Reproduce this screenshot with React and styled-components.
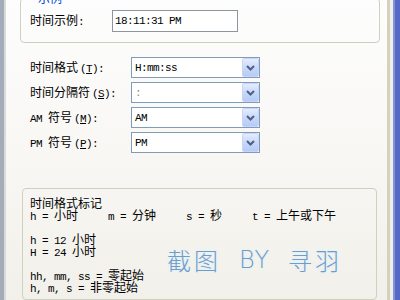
import React from 'react';
import styled, { createGlobalStyle } from 'styled-components';

const Global = createGlobalStyle`
  html, body { margin: 0; padding: 0; }
  body {
    width: 400px; height: 300px; overflow: hidden;
    font-family: "Noto Sans CJK SC", "Noto Sans", sans-serif;
    color: #000;
  }
`;

const Window = styled.div`
  width: 400px; height: 300px; display: flex; overflow: hidden;
`;
const LeftEdge = styled.div`
  width: 6px; flex: none;
  background: linear-gradient(to right, #a3adba 0 4px, #d9dbd9 4px 6px);
`;
const RightEdge = styled.div`
  width: 13px; flex: none;
  background: linear-gradient(to right, #d6d1bc 0 3px, #efeee9 3px 6px, #8393d8 6px 8px, #5568c6 8px);
`;
const Panel = styled.div`
  flex: 1; display: flex; flex-direction: column;
  background: linear-gradient(#fdfdfd, #f9f8f5 45%, #f1f0ea);
`;

const Ascii = styled.span`
  font-family: "Liberation Mono", monospace;
  font-size: 11px;
  letter-spacing: -0.6px;
  margin-left: ${p => (p.$gap ? 2 : 0)}px;
`;
const Key = styled.span`
  text-decoration: underline;
  text-underline-offset: 1px;
`;

function Mixed({ text }) {
  const parts = text.match(/[\x00-\x7f]+|[^\x00-\x7f]+/g) || [];
  return parts.map((p, i) =>
    /^[\x00-\x7f]/.test(p) ? <Ascii key={i}>{p}</Ascii> : <span key={i}>{p}</span>
  );
}

const SampleGroup = styled.fieldset`
  margin: -8px 7px 0 14px;
  padding: 6px 9px 10px 9px;
  border: 1px solid #d0d0bf;
  border-radius: 4px;
  min-width: 0;
`;
const Legend = styled.legend`
  margin-left: 6px;
  padding: 0 2px;
  font-size: 12px; line-height: 12px;
  color: #0046d5;
`;
const FieldRow = styled.div`
  display: flex; align-items: center;
  height: ${p => p.$h}px;
`;
const Label = styled.div`
  width: ${p => p.$w}px; flex: none;
  font-size: 12px; line-height: 14px;
  white-space: pre;
`;
const ReadBox = styled.div`
  width: 126px; height: 22px; box-sizing: border-box;
  border: 1px solid #8d959d;
  background: #fff;
  display: flex; align-items: center;
  padding-left: 2px;
  font-family: "Liberation Mono", monospace; font-size: 11px; letter-spacing: -0.6px;
`;

const Fields = styled.div`
  margin: 12px 0 0 24px;
  display: flex; flex-direction: column;
`;
const Combo = styled.div`
  width: 129px; height: 21px; box-sizing: border-box;
  border: 1px solid #7f9db9;
  background: #fff;
  display: flex; align-items: center;
`;
const ComboValue = styled.div`
  flex: 1; padding-left: 3px;
  font-family: "Liberation Mono", monospace; font-size: 11px; letter-spacing: -0.6px;
  color: ${p => (p.$muted ? '#8a8a8a' : '#000')};
`;
const DropButton = styled.div`
  width: 17px; height: 19px; box-sizing: border-box;
  border: 1px solid #c6d5fb;
  border-radius: 2px;
  background: linear-gradient(#e4ecfd, #c4d5fa 60%, #b7cbf6);
  display: flex; align-items: center; justify-content: center;
`;

const InfoGroup = styled.div`
  position: relative;
  margin: 33px 0 0 16px;
  width: 355px; height: 114px; box-sizing: border-box;
  border: 1px solid #d0d0bf;
  border-radius: 4px;
  padding: 8px 0 0 7px;
`;
const Line = styled.div`
  height: 12px; line-height: 12px;
  font-size: 12px;
  white-space: pre;
`;
const Watermark = styled.div`
  position: absolute; left: 144px; top: 58px;
  display: flex; align-items: center; gap: 18px;
  font-size: 24px; line-height: 26px;
  font-weight: 300;
  color: #6d9dc9;
  text-shadow: 0 0 2px #e2effa, 0 0 3px #e2effa;
  pointer-events: none;
`;
const WmCjk = styled.span`
  letter-spacing: 3px;
`;
const WmLatin = styled.span`
  font-family: "DejaVu Sans", sans-serif;
  font-weight: 200;
  letter-spacing: 1px;
`;

function Chevron() {
  return (
    <svg width="9" height="6" viewBox="0 0 9 6">
      <path d="M1 1 L4.5 4.5 L8 1" fill="none" stroke="#4d6185" strokeWidth="2" />
    </svg>
  );
}

const fields = [
  { zh: '时间格式', pre: '', key: 'T', value: 'H:mm:ss' },
  { zh: '时间分隔符', pre: '', key: 'S', value: ':', muted: true },
  { zh: '符号', pre: 'AM ', key: 'M', value: 'AM' },
  { zh: '符号', pre: 'PM ', key: 'P', value: 'PM' },
];

const infoLines = [
  '时间格式标记',
  'h = 小时     m = 分钟     s = 秒     t = 上午或下午',
  '',
  'h = 12 小时',
  'H = 24 小时',
  '',
  'hh, mm, ss = 零起始',
  'h, m, s = 非零起始',
];

export default function App() {
  return (
    <Window>
      <Global />
      <LeftEdge />
      <Panel>
        <SampleGroup>
          <Legend>示例</Legend>
          <FieldRow $h={22}>
            <Label $w={82}>时间示例<Ascii>:</Ascii></Label>
            <ReadBox>18:11:31 PM</ReadBox>
          </FieldRow>
        </SampleGroup>

        <Fields>
          {fields.map((f, i) => (
            <FieldRow key={i} $h={25}>
              <Label $w={101}>
                {f.pre && <Ascii>{f.pre}</Ascii>}
                {f.zh}
                <Ascii $gap>(<Key>{f.key}</Key>):</Ascii>
              </Label>
              <Combo>
                <ComboValue $muted={f.muted}>{f.value}</ComboValue>
                <DropButton><Chevron /></DropButton>
              </Combo>
            </FieldRow>
          ))}
        </Fields>

        <InfoGroup>
          {infoLines.map((t, i) => (
            <Line key={i}><Mixed text={t} /></Line>
          ))}
          <Watermark>
            <WmCjk>截图</WmCjk>
            <WmLatin>BY</WmLatin>
            <WmCjk>寻羽</WmCjk>
          </Watermark>
        </InfoGroup>
      </Panel>
      <RightEdge />
    </Window>
  );
}
